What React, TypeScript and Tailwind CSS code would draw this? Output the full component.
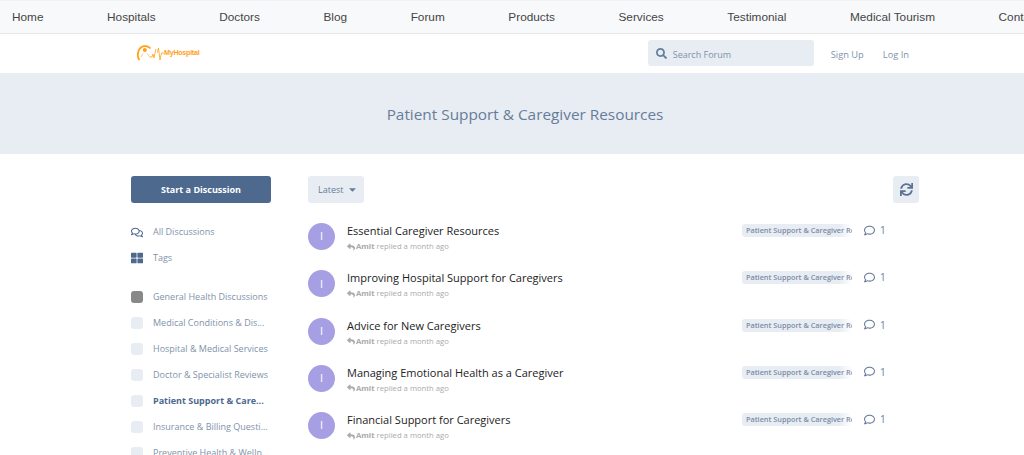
import React from "react";
import {
    FaCaretDown,
    FaRegComment,
    FaRegComments,
    FaReply,
    FaSearch,
    FaSync,
    FaThLarge,
} from "react-icons/fa";

const navLinks = ["Home", "Hospitals", "Doctors", "Blog", "Forum", "Products", "Services", "Testimonial", "Medical Tourism", "Contact"];

const categories = [
    { name: "General Health Discussions", color: "bg-[#888888]" },
    { name: "Medical Conditions & Dis..." },
    { name: "Hospital & Medical Services" },
    { name: "Doctor & Specialist Reviews" },
    { name: "Patient Support & Care...", active: true },
    { name: "Insurance & Billing Questi..." },
    { name: "Preventive Health & Welln..." },
];

const discussions = [
    "Essential Caregiver Resources",
    "Improving Hospital Support for Caregivers",
    "Advice for New Caregivers",
    "Managing Emotional Health as a Caregiver",
    "Financial Support for Caregivers",
];

const Logo: React.FC = () => (
    <div className="flex items-center">
        <svg width="22" height="18" viewBox="0 0 22 18" fill="none" className="shrink-0">
            <path d="M4 15.5C1.5 11 3 3.5 9 2.2C11.5 1.7 13.5 2.5 15 4" stroke="#ff9f14" strokeWidth="1.7" strokeLinecap="round" />
            <circle cx="9.8" cy="6" r="2" fill="#ff9f14" />
            <path d="M6 13L8 9.5M12 9.5L15 13.5" stroke="#ffc980" strokeWidth="1" />
            <path d="M15 13L17 13L18 10L19 14L20 9L21 5" stroke="#ff9f14" strokeWidth="0.8" />
        </svg>
        <svg width="7" height="18" viewBox="0 0 7 18" fill="none" className="shrink-0">
            <path d="M0 9L1.5 4L3 16L4.5 9L7 9" stroke="#ff9f14" strokeWidth="0.8" />
        </svg>
        <span className="font-['Liberation_Sans',sans-serif] text-[7.2px] font-bold tracking-[-0.3px] text-[#ffa21c]">MyHospital</span>
    </div>
);

export default function App() {
    return (
        <div className="h-[455px] overflow-hidden bg-white font-['Open_Sans',sans-serif]">
            <nav className="flex h-[34px] items-center gap-[63.6px] overflow-hidden border-t border-b border-t-[#f4f1f5] border-b-[#e6e8ea] bg-[#f8f9fa] px-3 pt-[1px] font-['Liberation_Sans',sans-serif] text-[11.8px] whitespace-nowrap text-[#454545]">
                {navLinks.map((link) => (
                    <a key={link} className="shrink-0">
                        {link}
                    </a>
                ))}
            </nav>

            <header className="flex h-[39px] items-center pr-[115px] pb-[1px] pl-[135px]">
                <Logo />
                <div className="ml-auto flex h-[26px] w-[166px] items-center gap-[6px] rounded-[3px] bg-[#e8ecf3] px-2">
                    <FaSearch className="text-[11px] text-[#667d99]" />
                    <span className="mt-[3px] text-[9px] text-[#8093aa]">Search Forum</span>
                </div>
                <a className="mt-[3px] ml-[17px] text-[9.3px] text-[#8093aa]">Sign Up</a>
                <a className="mt-[3px] ml-[19px] text-[9.3px] text-[#8093aa]">Log In</a>
            </header>

            <section className="flex h-[81px] items-center justify-center bg-[#e8ecf3] pt-[2px] pl-[26px] text-[15.35px] text-[#667d99]">
                Patient Support &amp; Caregiver Resources
            </section>

            <main className="mt-[22px] mr-[105px] ml-[131px] flex items-start">
                <aside className="w-[140px] shrink-0">
                    <button className="block h-[27px] w-full rounded-[3px] bg-[#4d698e] text-[9px] font-bold text-white">Start a Discussion</button>
                    <ul className="mt-[16px] text-[9px] text-[#8093aa]">
                        <li className="flex h-[26px] items-center gap-[10px]">
                            <FaRegComments className="w-3 text-[13px] text-[#4d698e]" />
                            All Discussions
                        </li>
                        <li className="flex h-[26px] items-center gap-[10px]">
                            <FaThLarge className="w-3 text-[12px] text-[#4d698e]" />
                            Tags
                        </li>
                    </ul>
                    <ul className="mt-[13px] text-[9px] whitespace-nowrap text-[#8093aa]">
                        {categories.map((category) => (
                            <li key={category.name} className={`flex h-[26px] items-center gap-[10px] ${category.active ? "font-bold text-[#4d698e]" : ""}`}>
                                <span className={`size-3 shrink-0 rounded-[3px] ${category.color ?? "bg-[#e8ecf3]"}`} />
                                {category.name}
                            </li>
                        ))}
                    </ul>
                </aside>

                <div className="ml-[37px] min-w-0 flex-1">
                    <div className="flex items-center justify-between">
                        <button className="flex h-[27px] w-[56px] items-center gap-[4px] rounded-[3px] bg-[#e8ecf3] pl-[10px] text-[9px] text-[#667d99]">
                            Latest
                            <FaCaretDown className="text-[11px]" />
                        </button>
                        <button className="flex h-[27px] w-[26px] items-center justify-center rounded-[3px] bg-[#e8ecf3] text-[13px] text-[#5a7394]">
                            <FaSync />
                        </button>
                    </div>

                    <ul className="mt-[20px]">
                        {discussions.map((title) => (
                            <li key={title} className="flex h-[47.3px] items-start">
                                <span className="flex size-[27px] shrink-0 items-center justify-center rounded-full bg-[#a79fe3] text-[11px] text-white">I</span>
                                <div className="ml-[12px] w-[395px] shrink-0">
                                    <p className="text-[11px] leading-[15px] text-[#222222]">{title}</p>
                                    <p className="mt-[2px] flex items-center text-[7.7px] leading-[13px] text-[#aaaaaa]">
                                        <FaReply className="mr-[1px] text-[8px]" />
                                        <b className="mr-[2px]">Amit</b> replied a month ago
                                    </p>
                                </div>
                                <span className="mt-[1px] h-[13px] w-[110px] shrink-0 overflow-hidden rounded-[3px] bg-[linear-gradient(to_right,#e8ecf3_88%,#ffffff)] px-1 text-[7.3px] leading-[13px] font-semibold whitespace-nowrap text-[#7b8da6]">
                                    Patient Support &amp; Caregiver Re
                                </span>
                                <span className="mt-[1px] ml-[12px] flex items-center gap-[5px] text-[10px] leading-[13px] text-[#667d99]">
                                    <FaRegComment className="-mt-[1px] text-[11px]" />1
                                </span>
                            </li>
                        ))}
                    </ul>
                </div>
            </main>
        </div>
    );
}
